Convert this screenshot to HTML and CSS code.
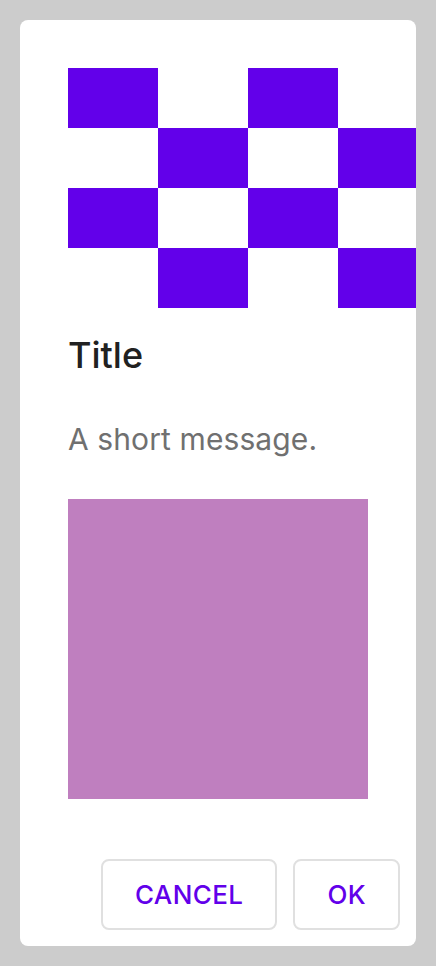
FILE: index.html
```html
<!DOCTYPE html>
<html>
<head>
<meta charset="utf-8">
<link rel="stylesheet" href="styles.css">
</head>
<body>
<div class="dialog">
  <div class="checker">
    <div class="c on"></div><div class="c"></div><div class="c on"></div><div class="c"></div>
    <div class="c"></div><div class="c on"></div><div class="c"></div><div class="c on"></div>
    <div class="c on"></div><div class="c"></div><div class="c on"></div><div class="c"></div>
    <div class="c"></div><div class="c on"></div><div class="c"></div><div class="c on"></div>
  </div>
  <h1 class="title">Title</h1>
  <p class="message">A short message.</p>
  <div class="swatch"></div>
  <div class="actions">
    <button class="btn">CANCEL</button>
    <button class="btn">OK</button>
  </div>
</div>
</body>
</html>
```
FILE: styles.css
```css
html, body {
  margin: 0;
  padding: 0;
  background: #cccccc;
}
body {
  padding: 20px;
  font-family: Inter, "Noto Sans", sans-serif;
}
.dialog {
  box-sizing: border-box;
  width: 396px;
  height: 926px;
  background: #ffffff;
  border-radius: 8px;
  overflow: hidden;
  padding: 48px 16px 16px 48px;
  display: flex;
  flex-direction: column;
}
.checker {
  display: grid;
  grid-template-columns: repeat(4, 90px);
  grid-template-rows: repeat(4, 60px);
  width: 360px;
  flex: none;
}
.c.on {
  background: #6200ea;
}
.title {
  margin: 27px 0 0 0;
  font-size: 36px;
  font-weight: 500;
  line-height: 40px;
  color: #212121;
}
.message {
  margin: 48px 0 0 0;
  font-size: 30px;
  font-weight: 400;
  line-height: 32px;
  color: #707070;
  letter-spacing: 0.1px;
}
.swatch {
  margin-top: 44px;
  width: 300px;
  height: 300px;
  background: #bf7fbf;
  flex: none;
}
.actions {
  margin-top: auto;
  display: flex;
  justify-content: flex-end;
  gap: 16px;
}
.btn {
  box-sizing: border-box;
  height: 71px;
  padding: 0 32px;
  background: #ffffff;
  border: 2px solid #e0e0e0;
  border-radius: 8px;
  font-family: Inter, "Noto Sans", sans-serif;
  font-size: 26px;
  font-weight: 500;
  color: #6200ea;
  letter-spacing: 0.4px;
}
```
